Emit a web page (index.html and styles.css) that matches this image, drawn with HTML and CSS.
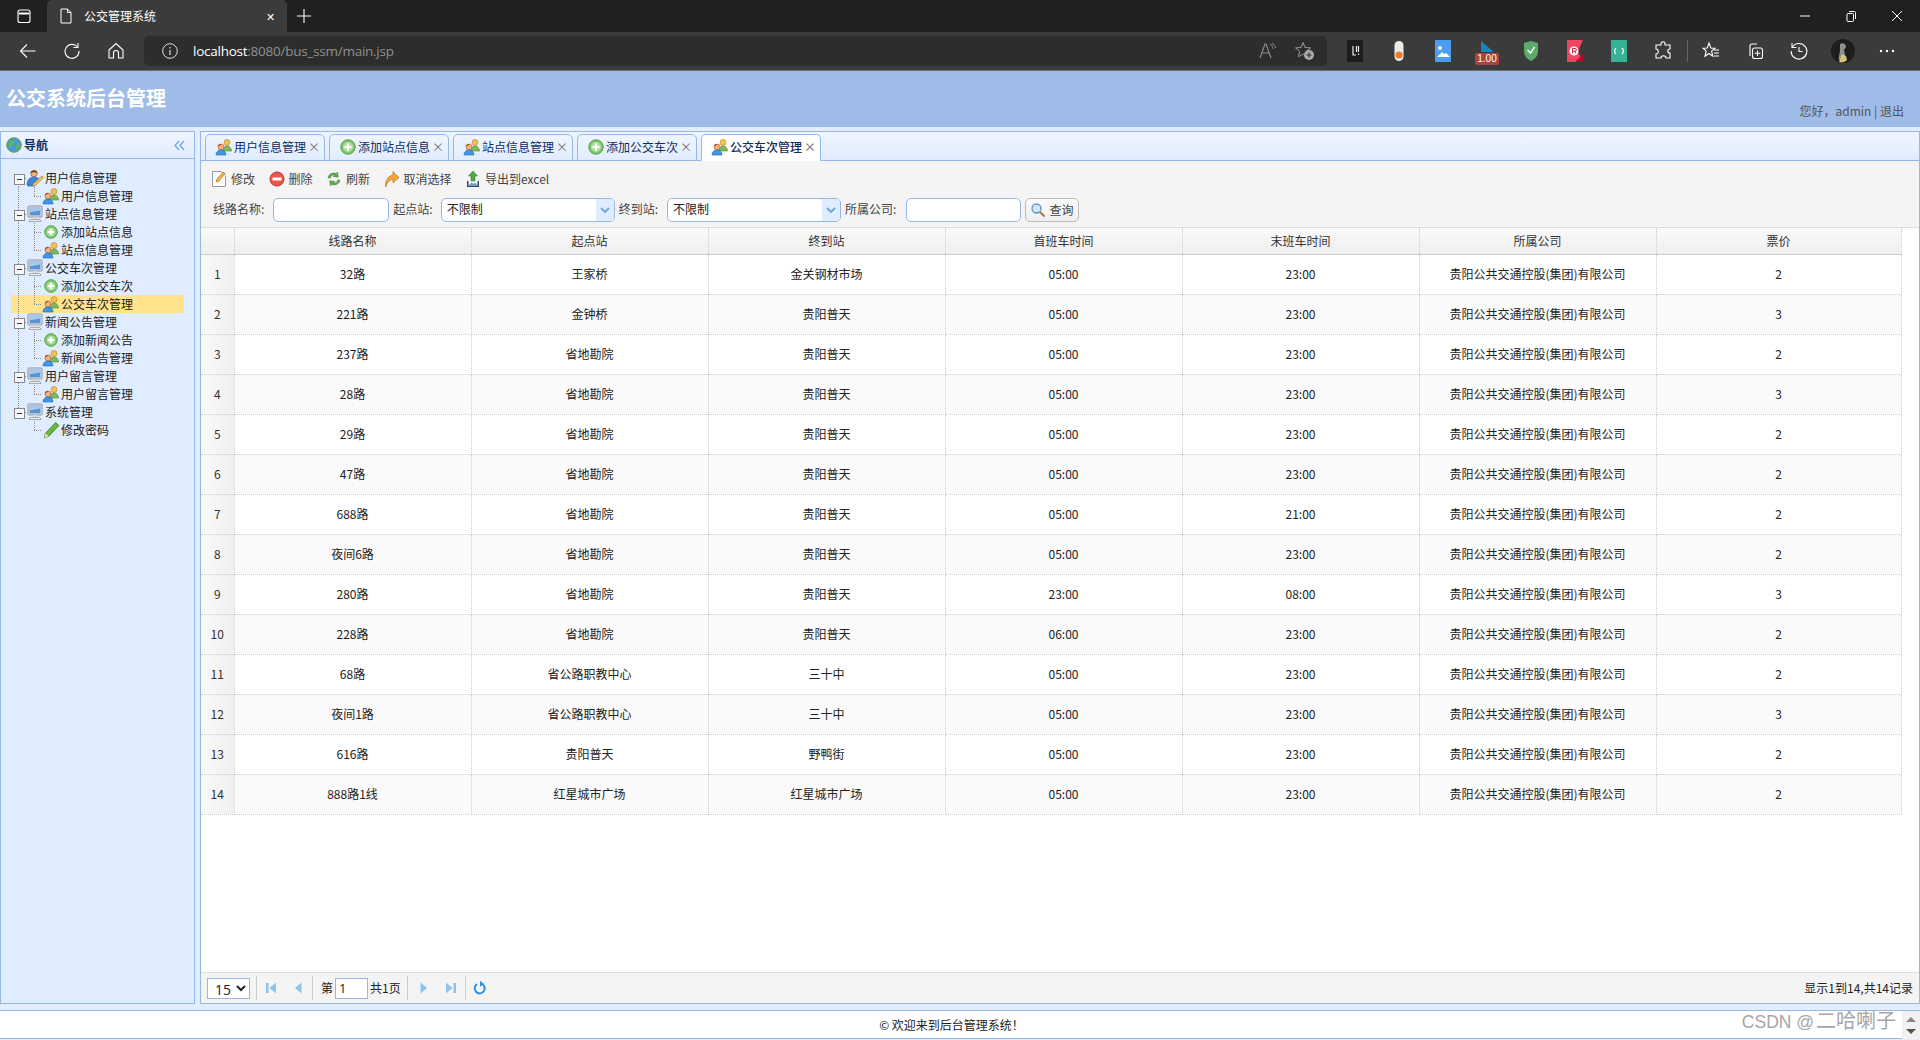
FILE: index.html
```html
<!DOCTYPE html>
<html lang="zh-CN">
<head>
<meta charset="utf-8">
<title>公交管理系统</title>
<link rel="stylesheet" href="styles.css">
</head>
<body>
<svg class="defs" width="0" height="0" aria-hidden="true">
  <defs>
    <symbol id="people" viewBox="0 0 18 18">
      <circle cx="12" cy="4.500" r="3" fill="#f4c04e" stroke="#b9842a" stroke-width=".6"/>
      <path d="M8 13c0-3 1.500-5 4-5s4.500 2 4.500 5z" fill="#7fb85a" stroke="#4d8a35" stroke-width=".6"/>
      <circle cx="6" cy="9" r="3" fill="#f0b27a" stroke="#a8552a" stroke-width=".6"/>
      <path d="M6.500 6.300c-2-.7-3.500.4-3.500 2.300l1.500-.8z" fill="#a8452a"/>
      <path d="M1 17c0-3 2-5 5-5s5 2 5 5z" fill="#3f97e6" stroke="#1f68b8" stroke-width=".6"/>
    </symbol>
    <symbol id="admin" viewBox="0 0 18 18">
      <circle cx="8" cy="4.500" r="3.300" fill="#f0b27a" stroke="#8a4a20" stroke-width=".6"/>
      <path d="M4.500 4c0-3 6-4 7 .3-2-1.300-5-1.300-7-.3z" fill="#7a3d18"/>
      <path d="M1 16c0-5 3-8 7-8 3 0 5 1.500 5.500 3L8 17H2z" fill="#3f85d6" stroke="#20589c" stroke-width=".6"/>
      <path d="M7 15l9-8 1.500 1.500-8.500 8.500H7z" fill="#f2c14e" stroke="#a87a20" stroke-width=".6"/>
    </symbol>
    <symbol id="monitor" viewBox="0 0 18 18">
      <rect x="2" y="1" width="14" height="11" rx="1" fill="#eceff3" stroke="#8a8f96"/>
      <rect x="3.500" y="2.500" width="11" height="8" fill="#5b93d2"/>
      <path d="M3.500 2.500h11v3c-4 1-8 1-11 2z" fill="#a5c8ee"/>
      <path d="M7 12h4v2H7z" fill="#d6d6d6"/>
      <path d="M4 14.500h10l1 2H3z" fill="#efefef" stroke="#8a8f96" stroke-width=".7"/>
    </symbol>
    <symbol id="plus" viewBox="0 0 16 16">
      <circle cx="8" cy="8" r="7.300" fill="#7cc46a" stroke="#4c9a42" stroke-width=".8"/>
      <circle cx="8" cy="8" r="5" fill="#b3dfa2"/>
      <path d="M8 4.500v7M4.500 8h7" stroke="#fff" stroke-width="2.200"/>
    </symbol>
    <symbol id="pencil" viewBox="0 0 16 16">
      <path d="M2 15l1-4L12 1.500l3 2.500-9 9.500z" fill="#6cbb3c" stroke="#3a7a1c" stroke-width=".8"/>
      <path d="M2 15l1-4 3 2.500z" fill="#f2dcae"/>
    </symbol>
    <symbol id="globe" viewBox="0 0 16 16">
      <circle cx="8" cy="8" r="7.300" fill="#4a9ad8" stroke="#5aa648"/>
      <path d="M3 5c2-2 4-2 5-1s0 3-1 4-1 3-3 2-2-3-1-5zM10 8c2-1 3 0 4 1-1 3-2 4-3 4s-2-3-1-5z" fill="#66b25a"/>
    </symbol>
    <symbol id="edit" viewBox="0 0 16 18">
      <path d="M1.500 1.500h9l4 4v11h-13z" fill="#fdfdfd" stroke="#9a9a9a"/>
      <path d="M5 12l1-3 6-7 2 1.500-6 7.500z" fill="#f0b848" stroke="#a8701c" stroke-width=".7"/>
    </symbol>
    <symbol id="del" viewBox="0 0 16 16">
      <circle cx="8" cy="8" r="7" fill="#e8584f" stroke="#b5342c"/>
      <path d="M3.500 8h9" stroke="#fff" stroke-width="3"/>
    </symbol>
    <symbol id="reload" viewBox="0 0 16 16">
      <path d="M2 7c.5-3.500 4-6 8-4.500l1.500-1.500.8 5.200-5.200-.6 1.400-1.500C6 3.500 4.500 5 4.500 7z" fill="#63ab4a" stroke="#3d7c2c" stroke-width=".5"/>
      <path d="M14 9c-.5 3.500-4 6-8 4.500L4.500 15l-.8-5.200 5.200.6-1.400 1.500c2.500.6 4-.9 4-2.900z" fill="#63ab4a" stroke="#3d7c2c" stroke-width=".5"/>
    </symbol>
    <symbol id="undo" viewBox="0 0 16 18">
      <path d="M1.500 17C1.500 10 4 6 9 5V1.500l6 6-6 5.500V9c-3 .5-5.500 3-7.500 8z" fill="#f2a83c" stroke="#b8741c" stroke-width=".7"/>
    </symbol>
    <symbol id="export" viewBox="0 0 16 18">
      <path d="M8 1l4.500 5H10v5H6V6H3.500z" fill="#4caa48" stroke="#2f7c2c" stroke-width=".5"/>
      <path d="M2 11v6h12v-6h-1.500v4.500h-9V11z" fill="#3a4a66"/>
      <path d="M3.500 15.500l3-3 2 1.500 2-1.500 2 3z" fill="#6f9ccb"/>
    </symbol>
    <symbol id="caret" viewBox="0 0 10 6">
      <path d="M1 1l4 4 4-4" fill="none" stroke="#6fa7de" stroke-width="2"/>
    </symbol>
  </defs>
</svg>

<div class="page">
  <div class="tabstrip">
    <svg class="strip-panel" width="16" height="16" viewBox="0 0 16 16"><rect x="2" y="2" width="12" height="12.500" rx="2" fill="none" stroke="#fff" stroke-width="1.100"/><path d="M2.500 5.500h11" stroke="#fff" stroke-width="2"/></svg>
    <div class="browser-tab">
      <svg width="14" height="16" viewBox="0 0 14 16"><path d="M2 1h6.500L12 4.500V15H2z" fill="none" stroke="#fff"/><path d="M8.500 1v3.500H12" fill="none" stroke="#fff"/></svg>
      <span class="browser-tab-title">公交管理系统</span>
      <span class="browser-tab-x">✕</span>
    </div>
    <svg class="strip-plus" width="16" height="16" viewBox="0 0 16 16"><path d="M8 1v14M1 8h14" stroke="#fff" stroke-width="1.100"/></svg>
    <div class="winctl">
      <svg width="12" height="12" viewBox="0 0 12 12"><path d="M1 6h10" stroke="#fff"/></svg>
      <svg width="12" height="12" viewBox="0 0 12 12"><rect x="2" y="3.500" width="6.500" height="8" rx="1" fill="none" stroke="#fff"/><path d="M4 1.500h5.500a1 1 0 0 1 1 1V9" fill="none" stroke="#fff"/></svg>
      <svg width="12" height="12" viewBox="0 0 12 12"><path d="M1 1l10 10M11 1L1 11" stroke="#fff"/></svg>
    </div>
  </div>

  <div class="urlbar">
    <svg class="nav-btn" width="18" height="18" viewBox="0 0 18 18"><path d="M1.500 9h15M8 2.500L1.500 9 8 15.500" fill="none" stroke="#fff" stroke-width="1.100"/></svg>
    <svg class="nav-btn" width="18" height="18" viewBox="0 0 18 18"><path d="M14.500 5A7 7 0 1 0 16 9" fill="none" stroke="#fff" stroke-width="1.100"/><path d="M15 1v4.500h-4.500" fill="none" stroke="#fff" stroke-width="1.100"/></svg>
    <svg class="nav-btn" width="18" height="18" viewBox="0 0 18 18"><path d="M2 8l7-6.500L16 8v8h-4.500v-5a2.500 2.500 0 0 0-5 0v5H2z" fill="none" stroke="#fff" stroke-width="1.100"/></svg>
    <div class="address">
      <svg width="16" height="16" viewBox="0 0 16 16"><circle cx="8" cy="8" r="7.300" fill="none" stroke="#ddd"/><path d="M8 7v5M8 4v1.500" stroke="#ddd" stroke-width="1.200"/></svg>
      <span class="url"><b>localhost</b>:8080/bus_ssm/main.jsp</span>
      <span class="spacer"></span>
      <svg class="addr-ico" width="18" height="18" viewBox="0 0 18 18"><path d="M1 16L6 2h1l5 14M3 11h7" fill="none" stroke="#8f8f8f" stroke-width="1.100"/><path d="M11 2c2 1 3 3 3 5M13 1c2 1.500 3.500 3 3.500 5" fill="none" stroke="#8f8f8f"/></svg>
      <svg class="addr-ico" width="20" height="20" viewBox="0 0 20 20"><path d="M8 1.500l2 5 5.500.4-4.200 3.500 1.300 5.300L8 13l-4.600 2.700 1.300-5.300L.5 6.900 6 6.500z" fill="none" stroke="#9a9a9a"/><circle cx="14" cy="14" r="5" fill="#aaa"/><path d="M14 11.500v5M11.500 14h5" stroke="#333" stroke-width="1.200"/></svg>
    </div>
    <div class="ext-row">
      <span class="ext"><svg width="16" height="22" viewBox="0 0 16 22"><rect width="16" height="22" fill="#1c1c1c"/><path d="M6 6v9h3M9.500 6v6M11.500 6v6M11.500 13.500v1.500" stroke="#eee" stroke-width="1.200" fill="none"/></svg></span>
      <span class="ext"><svg width="12" height="22" viewBox="0 0 12 22"><rect x="1.500" y="1" width="9" height="20" rx="4.500" fill="#ecebe6"/><circle cx="6" cy="15" r="3.500" fill="#ee7a2a"/></svg></span>
      <span class="ext"><svg width="16" height="22" viewBox="0 0 16 22"><rect width="16" height="22" fill="#4a9df0"/><circle cx="5" cy="8" r="2" fill="#fff"/><path d="M2 17l5-5 2 2 2-1 4 4z" fill="#fff"/></svg></span>
      <span class="ext ext-badge"><svg width="16" height="14" viewBox="0 0 16 14"><path d="M2 1l13 11H2z" fill="#1585c0"/></svg><em class="badge">1.00</em></span>
      <span class="ext"><svg width="16" height="22" viewBox="0 0 16 22"><path d="M1 3l7-2 7 2v8c0 5-3 8-7 10-4-2-7-5-7-10z" fill="#5cab68"/><path d="M4.500 10l3 3 4-6" fill="none" stroke="#fff" stroke-width="1.500"/></svg></span>
      <span class="ext"><svg width="16" height="22" viewBox="0 0 16 22"><rect width="16" height="22" fill="#ee4560"/><path d="M16 0l-5 11 5 11z" fill="#3b3b3b"/><path d="M8 22l8-8v8z" fill="#b01030"/><circle cx="7" cy="11" r="4.500" fill="#fff"/><path d="M5.500 13.500v-5h2.500a1.300 1.300 0 0 1 0 2.800H5.500M7.500 11l1.500 2.500" stroke="#d02040" fill="none"/></svg></span>
      <span class="ext"><svg width="16" height="22" viewBox="0 0 16 22"><rect width="16" height="22" fill="#35b394"/><path d="M5 8a4 4 0 0 0 0 6M11 8a4 4 0 0 1 0 6" fill="none" stroke="#fff" stroke-width="1.200"/></svg></span>
      <span class="ext"><svg width="18" height="20" viewBox="0 0 18 20"><path d="M7 3c0-3 4-3 4 0v1h5v4c-3 0-3 4 0 4v5h-4c0-3-5-3-5 0H2v-4c3 0 3-5 0-5V4h5z" fill="none" stroke="#fff" stroke-width="1.100"/></svg></span>
      <span class="ext-sep"></span>
      <span class="ext"><svg width="18" height="20" viewBox="0 0 18 20"><path d="M7 2l1.800 5 4.200.2-3.400 3 1.200 5L7 12.500 3 15.200l1.200-5L1 7.200 5.200 7z" fill="none" stroke="#fff" stroke-width="1.100"/><path d="M12 9h5M12 12h5M12 15h5" stroke="#fff" stroke-width="1.100"/></svg></span>
      <span class="ext"><svg width="18" height="20" viewBox="0 0 18 20"><path d="M4 15V5a2 2 0 0 1 2-2h5" fill="none" stroke="#fff" stroke-width="1.100"/><rect x="6.500" y="7" width="10" height="10.500" rx="2" fill="none" stroke="#fff" stroke-width="1.100"/><path d="M11.500 9.500v5.500M8.700 12.200h5.600" stroke="#fff" stroke-width="1.100"/></svg></span>
      <span class="ext"><svg width="18" height="18" viewBox="0 0 18 18"><path d="M2.500 5A7.800 7.800 0 1 1 1.200 9" fill="none" stroke="#fff" stroke-width="1.100"/><path d="M2 1v4.500h4.500M9 5v4.500h3.500" fill="none" stroke="#fff" stroke-width="1.100"/></svg></span>
      <span class="ext"><svg width="24" height="24" viewBox="0 0 24 24"><circle cx="12" cy="12" r="12" fill="#1d1d1d"/><path d="M9 5c3-2 6 0 6 3l-2 3 1 5-3 6c-3 0-4-2-3-5l1-5z" fill="#8f8f8f"/><path d="M8 23l3-8 4 2 1 4c-2 2-5 3-8 2z" fill="#d8c27a"/></svg></span>
      <span class="ext"><svg width="16" height="4" viewBox="0 0 16 4"><circle cx="2" cy="2" r="1.200" fill="#fff"/><circle cx="8" cy="2" r="1.200" fill="#fff"/><circle cx="14" cy="2" r="1.200" fill="#fff"/></svg></span>
    </div>
  </div>

  <header class="app-head">
    <h1 class="app-title">公交系统后台管理</h1>
    <div class="app-user">您好，admin | 退出</div>
  </header>

  <div class="workspace">
    <aside class="nav-panel">
      <div class="nav-head">
        <svg class="i16" width="16" height="16"><use href="#globe"/></svg>
        <span class="nav-title">导航</span>
        <span class="spacer"></span>
        <svg class="collapse" width="11" height="11" viewBox="0 0 11 11"><path d="M5 1L1 5.500 5 10M10 1L6 5.500 10 10" fill="none" stroke="#6fa7de" stroke-width="1.300"/></svg>
      </div>
      <ul class="tree">
        <li class="node"><span class="cell v-first tog"></span><svg class="ico" width="18" height="18"><use href="#admin"/></svg><span class="lbl">用户信息管理</span></li>
        <li class="node"><span class="cell v"></span><span class="cell elbow"></span><svg class="ico" width="18" height="18"><use href="#people"/></svg><span class="lbl">用户信息管理</span></li>
        <li class="node"><span class="cell v tog"></span><svg class="ico" width="18" height="18"><use href="#monitor"/></svg><span class="lbl">站点信息管理</span></li>
        <li class="node"><span class="cell v"></span><span class="cell tee"></span><svg class="ico ico-sm" width="14" height="14"><use href="#plus"/></svg><span class="lbl">添加站点信息</span></li>
        <li class="node"><span class="cell v"></span><span class="cell elbow"></span><svg class="ico" width="18" height="18"><use href="#people"/></svg><span class="lbl">站点信息管理</span></li>
        <li class="node"><span class="cell v tog"></span><svg class="ico" width="18" height="18"><use href="#monitor"/></svg><span class="lbl">公交车次管理</span></li>
        <li class="node"><span class="cell v"></span><span class="cell tee"></span><svg class="ico ico-sm" width="14" height="14"><use href="#plus"/></svg><span class="lbl">添加公交车次</span></li>
        <li class="node selected"><span class="cell v"></span><span class="cell elbow"></span><svg class="ico" width="18" height="18"><use href="#people"/></svg><span class="lbl">公交车次管理</span></li>
        <li class="node"><span class="cell v tog"></span><svg class="ico" width="18" height="18"><use href="#monitor"/></svg><span class="lbl">新闻公告管理</span></li>
        <li class="node"><span class="cell v"></span><span class="cell tee"></span><svg class="ico ico-sm" width="14" height="14"><use href="#plus"/></svg><span class="lbl">添加新闻公告</span></li>
        <li class="node"><span class="cell v"></span><span class="cell elbow"></span><svg class="ico" width="18" height="18"><use href="#people"/></svg><span class="lbl">新闻公告管理</span></li>
        <li class="node"><span class="cell v tog"></span><svg class="ico" width="18" height="18"><use href="#monitor"/></svg><span class="lbl">用户留言管理</span></li>
        <li class="node"><span class="cell v"></span><span class="cell elbow"></span><svg class="ico" width="18" height="18"><use href="#people"/></svg><span class="lbl">用户留言管理</span></li>
        <li class="node"><span class="cell v-last tog"></span><svg class="ico" width="18" height="18"><use href="#monitor"/></svg><span class="lbl">系统管理</span></li>
        <li class="node"><span class="cell"></span><span class="cell elbow"></span><svg class="ico" width="18" height="18"><use href="#pencil"/></svg><span class="lbl">修改密码</span></li>
      </ul>
    </aside>

    <main class="main-panel">
      <div class="tabs">
        <div class="tab"><svg width="18" height="18"><use href="#people"/></svg><span class="tab-text">用户信息管理</span><span class="tab-x">×</span></div>
        <div class="tab"><svg width="16" height="16"><use href="#plus"/></svg><span class="tab-text">添加站点信息</span><span class="tab-x">×</span></div>
        <div class="tab"><svg width="18" height="18"><use href="#people"/></svg><span class="tab-text">站点信息管理</span><span class="tab-x">×</span></div>
        <div class="tab"><svg width="16" height="16"><use href="#plus"/></svg><span class="tab-text">添加公交车次</span><span class="tab-x">×</span></div>
        <div class="tab active"><svg width="18" height="18"><use href="#people"/></svg><span class="tab-text">公交车次管理</span><span class="tab-x">×</span></div>
      </div>

      <div class="tools">
        <div class="tool-row">
          <span class="tool"><svg width="16" height="18"><use href="#edit"/></svg>修改</span>
          <span class="tool"><svg width="16" height="16"><use href="#del"/></svg>删除</span>
          <span class="tool"><svg width="16" height="16"><use href="#reload"/></svg>刷新</span>
          <span class="tool"><svg width="16" height="18"><use href="#undo"/></svg>取消选择</span>
          <span class="tool"><svg width="16" height="18"><use href="#export"/></svg>导出到excel</span>
        </div>
        <div class="search-row">
          <label class="lab lab-first">线路名称:</label>
          <input class="text-in" type="text">
          <label class="lab lab-mid">起点站:</label>
          <div class="combo"><span class="combo-text">不限制</span><span class="combo-btn"><svg width="10" height="6"><use href="#caret"/></svg></span></div>
          <label class="lab lab-tight">终到站:</label>
          <div class="combo"><span class="combo-text">不限制</span><span class="combo-btn"><svg width="10" height="6"><use href="#caret"/></svg></span></div>
          <label class="lab lab-co">所属公司:</label>
          <input class="text-in text-co" type="text">
          <button class="search-btn" type="button"><svg width="16" height="16" viewBox="0 0 16 16"><circle cx="6.500" cy="6.500" r="4.500" fill="#cfe6fa" stroke="#5d94c8" stroke-width="1.300"/><path d="M10 10l4.500 4.500" stroke="#a87a3c" stroke-width="2"/></svg>查询</button>
        </div>
      </div>

      <div class="grid-wrap">
        <table class="grid">
          <colgroup><col class="c-num"><col class="c-w"><col class="c-w"><col class="c-w"><col class="c-w"><col class="c-w"><col class="c-w"><col class="c-last"></colgroup>
          <thead><tr><th></th><th>线路名称</th><th>起点站</th><th>终到站</th><th>首班车时间</th><th>末班车时间</th><th>所属公司</th><th>票价</th></tr></thead>
          <tbody>
            <tr><td class="num">1</td><td>32路</td><td>王家桥</td><td>金关钢材市场</td><td>05:00</td><td>23:00</td><td>贵阳公共交通控股(集团)有限公司</td><td>2</td></tr>
            <tr><td class="num">2</td><td>221路</td><td>金钟桥</td><td>贵阳普天</td><td>05:00</td><td>23:00</td><td>贵阳公共交通控股(集团)有限公司</td><td>3</td></tr>
            <tr><td class="num">3</td><td>237路</td><td>省地勘院</td><td>贵阳普天</td><td>05:00</td><td>23:00</td><td>贵阳公共交通控股(集团)有限公司</td><td>2</td></tr>
            <tr><td class="num">4</td><td>28路</td><td>省地勘院</td><td>贵阳普天</td><td>05:00</td><td>23:00</td><td>贵阳公共交通控股(集团)有限公司</td><td>3</td></tr>
            <tr><td class="num">5</td><td>29路</td><td>省地勘院</td><td>贵阳普天</td><td>05:00</td><td>23:00</td><td>贵阳公共交通控股(集团)有限公司</td><td>2</td></tr>
            <tr><td class="num">6</td><td>47路</td><td>省地勘院</td><td>贵阳普天</td><td>05:00</td><td>23:00</td><td>贵阳公共交通控股(集团)有限公司</td><td>2</td></tr>
            <tr><td class="num">7</td><td>688路</td><td>省地勘院</td><td>贵阳普天</td><td>05:00</td><td>21:00</td><td>贵阳公共交通控股(集团)有限公司</td><td>2</td></tr>
            <tr><td class="num">8</td><td>夜间6路</td><td>省地勘院</td><td>贵阳普天</td><td>05:00</td><td>23:00</td><td>贵阳公共交通控股(集团)有限公司</td><td>2</td></tr>
            <tr><td class="num">9</td><td>280路</td><td>省地勘院</td><td>贵阳普天</td><td>23:00</td><td>08:00</td><td>贵阳公共交通控股(集团)有限公司</td><td>3</td></tr>
            <tr><td class="num">10</td><td>228路</td><td>省地勘院</td><td>贵阳普天</td><td>06:00</td><td>23:00</td><td>贵阳公共交通控股(集团)有限公司</td><td>2</td></tr>
            <tr><td class="num">11</td><td>68路</td><td>省公路职教中心</td><td>三十中</td><td>05:00</td><td>23:00</td><td>贵阳公共交通控股(集团)有限公司</td><td>2</td></tr>
            <tr><td class="num">12</td><td>夜间1路</td><td>省公路职教中心</td><td>三十中</td><td>05:00</td><td>23:00</td><td>贵阳公共交通控股(集团)有限公司</td><td>3</td></tr>
            <tr><td class="num">13</td><td>616路</td><td>贵阳普天</td><td>野鸭街</td><td>05:00</td><td>23:00</td><td>贵阳公共交通控股(集团)有限公司</td><td>2</td></tr>
            <tr><td class="num">14</td><td>888路1线</td><td>红星城市广场</td><td>红星城市广场</td><td>05:00</td><td>23:00</td><td>贵阳公共交通控股(集团)有限公司</td><td>2</td></tr>
          </tbody>
        </table>
      </div>

      <div class="pager">
        <select class="page-size"><option>15</option></select>
        <span class="pg-sep"></span>
        <svg class="pg-btn" width="16" height="16" viewBox="0 0 16 16"><path d="M3 3h2.500v10H3zM13 2.500v11L6.500 8z" fill="#8cc4ee"/></svg>
        <svg class="pg-btn" width="16" height="16" viewBox="0 0 16 16"><path d="M11.500 2.500v11L5 8z" fill="#8cc4ee"/></svg>
        <span class="pg-sep"></span>
        <span class="pg-text">第</span>
        <input class="pg-input" type="text" value="1">
        <span class="pg-text">共1页</span>
        <span class="pg-sep"></span>
        <svg class="pg-btn" width="16" height="16" viewBox="0 0 16 16"><path d="M4.500 2.500v11L11 8z" fill="#8cc4ee"/></svg>
        <svg class="pg-btn" width="16" height="16" viewBox="0 0 16 16"><path d="M3 2.500v11L9.500 8zM10.500 3H13v10h-2.500z" fill="#8cc4ee"/></svg>
        <span class="pg-sep"></span>
        <svg class="pg-btn" width="16" height="16" viewBox="0 0 16 16"><path d="M9 3.600a5 5 0 1 1-4 .6" fill="none" stroke="#2e8fe0" stroke-width="2"/><path d="M8 .8v6L12 4z" fill="#2e8fe0"/></svg>
        <span class="spacer"></span>
        <span class="pg-info">显示1到14,共14记录</span>
      </div>
    </main>
  </div>

  <footer class="foot">© 欢迎来到后台管理系统！</footer>
  <div class="watermark"><span class="wm-latin">CSDN @</span>二哈喇子 !</div>
  <div class="mini-scroll"><span class="sc-up"></span><span class="sc-down"></span></div>
</div>
</body>
</html>
```
FILE: styles.css
```css
* { box-sizing: border-box; }
html, body { margin: 0; padding: 0; height: 100%; overflow: hidden; }
body { font: 12px/18px "Noto Sans CJK SC", "Noto Sans", sans-serif; color: #222; }
.defs { position: absolute; }
ul { list-style: none; margin: 0; padding: 0; }
.spacer { flex: 1; }
.page { position: relative; display: flex; flex-direction: column; height: 1040px; background: #e3eefa; }

/* browser chrome */
.tabstrip { display: flex; align-items: center; height: 32px; flex: none; background: #202020; padding-left: 16px; }
.strip-panel { margin-right: 15px; }
.browser-tab { display: flex; align-items: center; width: 240px; height: 32px; padding-left: 12px; background: #3b3b3b; border-radius: 5px 5px 0 0; color: #fff; }
.browser-tab-title { margin-left: 11px; flex: 1; }
.browser-tab-x { font-size: 11px; margin-right: 12px; }
.strip-plus { margin-left: 9px; }
.winctl { margin-left: auto; display: flex; gap: 34px; padding-right: 17px; }
.urlbar { display: flex; align-items: center; height: 39px; flex: none; background: #3b3b3b; border-bottom: 1px solid #6b6b6b; padding: 0 0 1px 19px; }
.nav-btn { margin-right: 26px; }
.nav-btn + .address { margin-left: -7px; }
.address { display: flex; align-items: center; width: 1183px; height: 30px; background: #2d2d2d; border-radius: 5px; padding-left: 18px; padding-right: 12px; }
.url { margin-left: 15px; font: 13.5px/18px "Open Sans", sans-serif; color: #8f8f8f; letter-spacing: -.25px; }
.url b { font-weight: 400; color: #fff; }
.addr-ico { margin-left: 18px; }
.ext-row { display: flex; align-items: center; padding-left: 6px; }
.ext { display: flex; flex-direction: column; align-items: center; justify-content: center; width: 44px; height: 30px; }
.ext-sep { width: 1px; height: 22px; background: #666; margin: 0 1px 0 2px; }
.ext-badge { padding-top: 4px; }
.badge { display: block; width: 24px; height: 12px; margin-top: -1px; background: #a94442; border-radius: 2px; color: #fff; font: 10px/12px "Liberation Sans", sans-serif; text-align: center; }

/* app header */
.app-head { display: flex; justify-content: space-between; height: 56px; flex: none; background: #9fbce8; border-bottom: 1px solid #95b8e7; }
.app-title { margin: 14px 0 0 6px; font: bold 20px/26px "Noto Sans CJK SC", sans-serif; color: #fff; }
.app-user { align-self: flex-end; margin: 0 16px 6px 0; color: #555; }

/* layout */
.workspace { display: flex; gap: 5px; flex: 1; min-height: 0; padding-top: 4px; }
.nav-panel { display: flex; flex-direction: column; width: 195px; flex: none; background: #e0ecff; border: 1px solid #95b8e7; }
.nav-head { display: flex; align-items: center; height: 27px; flex: none; padding: 0 9px 0 5px; background: linear-gradient(#eff5ff, #e0ecff); border-bottom: 1px solid #95b8e7; }
.nav-title { margin-left: 2px; font-weight: 700; color: #0e2d5f; }
.tree { padding: 10px 0 0 10px; width: 183px; }
.node { display: flex; align-items: center; height: 18px; white-space: nowrap; }
.node.selected { background: #ffe48d; }
.cell { position: relative; width: 16px; height: 18px; flex: none; background-repeat: no-repeat; }
.node > .cell:first-child { width: 15px; }
.lbl { margin-left: 1px; color: #222; }
.ico { flex: none; }
.ico-sm { margin: 0 2px; }
.v, .v-first, .v-last, .tee, .elbow { --dots: repeating-linear-gradient(#8a8a8a 0 1px, transparent 1px 2px); --dash: repeating-linear-gradient(90deg, #8a8a8a 0 1px, transparent 1px 2px); }
.v { background-image: var(--dots); background-position: 7px 0; background-size: 1px 18px; }
.v-first { background-image: var(--dots); background-position: 7px 9px; background-size: 1px 9px; }
.v-last { background-image: var(--dots); background-position: 7px 0; background-size: 1px 9px; }
.tee { background-image: var(--dots), var(--dash); background-position: 8px 0, 8px 9px; background-size: 1px 18px, 8px 1px; }
.elbow { background-image: var(--dots), var(--dash); background-position: 8px 0, 8px 9px; background-size: 1px 9px, 8px 1px; }
.tog::after { content: ""; position: absolute; left: 3px; top: 5px; width: 9px; height: 9px; border: 1px solid #888; background: linear-gradient(90deg, #333, #333) center / 5px 1px no-repeat, #f4f7fb; }
.tog::before { content: ""; position: absolute; left: 12px; top: 9px; width: 3px; height: 1px; background: #8a8a8a; }

/* main panel */
.main-panel { display: flex; flex-direction: column; flex: 1; min-width: 0; background: #fff; border: 1px solid #95b8e7; }
.tabs { display: flex; gap: 4px; align-items: flex-end; height: 29px; flex: none; padding-left: 4px; background: linear-gradient(#eff5ff, #e0ecff); border-bottom: 1px solid #95b8e7; }
.tab { display: flex; align-items: center; width: 120px; height: 27px; margin-bottom: -1px; padding: 0 0 2px 9px; background: linear-gradient(#eff5ff, #e0ecff); border: 1px solid #95b8e7; border-radius: 5px 5px 0 0; color: #0e2d5f; }
.tab svg { flex: none; }
.tab svg[width="16"] { margin: 0 1px; }
.tab.active { background: #fff; border-bottom-color: #fff; color: #0e2d5f; font-weight: 500; }
.tab-text { margin-left: 1px; }
.tab-x { margin-left: 2px; font-size: 12px; color: #777; }
.tools { flex: none; height: 67px; background: #f4f4f4; border-bottom: 1px solid #ddd; }
.tool-row { display: flex; height: 35px; align-items: center; padding: 0 0 0 10px; gap: 13.5px; }
.tool { display: flex; align-items: center; gap: 4px; color: #444; }
.search-row { display: flex; align-items: center; height: 24px; margin-top: 2px; padding-left: 12px; }
.lab { color: #444; margin-bottom: 2px; }
.lab-mid { margin-left: 4px; margin-right: 8px; }
.lab-first { margin-right: 9px; }
.lab-tight { margin: 0 9px 2px 4px; }
.lab-co { margin: 0 10px 2px 4px; }
.text-in { width: 116px; height: 24px; padding: 0 4px; border: 1px solid #95b8e7; border-radius: 5px; background: #fff; outline: none; }
.text-co { width: 115px; }
.combo { display: flex; align-items: center; width: 174px; height: 24px; border: 1px solid #95b8e7; border-radius: 5px; background: #fff; overflow: hidden; }
.combo-text { flex: 1; padding: 0 0 2px 5px; color: #222; }
.combo-btn { display: flex; align-items: center; justify-content: center; width: 18px; height: 100%; background: #e0ecff; }
.search-btn { display: flex; align-items: center; gap: 3px; width: 54px; height: 24px; margin-left: 4px; padding: 0 0 0 4px; border: 1px solid #bbb; border-radius: 5px; background: linear-gradient(#fafafa, #efefef); font: inherit; color: #444; }
.grid-wrap { flex: 1; min-height: 0; overflow: hidden; background: #fff; }
.grid { width: 1700px; table-layout: fixed; border-collapse: collapse; }
.c-num { width: 33px; }
.c-w { width: 237px; }
.c-last { width: 245px; }
.grid th { height: 26px; padding: 0; font-weight: 400; color: #333; text-align: center; background: linear-gradient(#f9f9f9, #efefef); border-right: 1px dotted #ccc; border-bottom: 1px solid #ccc; }
.grid td { height: 40px; padding: 0; text-align: center; color: #222; border-right: 1px dotted #ccc; border-bottom: 1px dotted #ccc; }
.grid tr:nth-child(even) td { background: #fafafa; }
.grid td.num, .grid tr:nth-child(even) td.num { color: #333; background: linear-gradient(90deg, #f9f9f9, #efefef); }
.pager { display: flex; align-items: center; height: 31px; flex: none; padding: 0 6px 0 6px; background: #f4f4f4; border-top: 1px solid #ddd; }
.page-size { width: 43px; height: 21px; padding: 0 0 0 3px; border: 1px solid #95b8e7; background: #fff; font: 14px "Open Sans", sans-serif; color: #222; outline: none; }
.pg-sep { width: 1px; height: 24px; background: #ccc; margin: 0 6px; }
.pg-btn + .pg-btn { margin-left: 11px; }
.pg-text { color: #222; margin-left: 2px; }
.pg-text + .pg-sep { margin-right: 8px; }
.pg-input { width: 33px; height: 21px; margin-left: 2px; padding: 0 3px; border: 1px solid #95b8e7; font: 13px "Open Sans", sans-serif; color: #222; outline: none; }
.pg-info { color: #222; }

/* footer */
.foot { flex: none; height: 29px; margin: 6px 0 1px; padding: 5px 17px 0 0; text-align: center; background: #fff; border-top: 1px solid #95b8e7; border-bottom: 1px solid #95b8e7; color: #222; }
.watermark { position: absolute; right: 13px; bottom: 6px; font: 20px/24px "Noto Sans CJK SC", sans-serif; color: #a6a6a6; white-space: nowrap; }
.wm-latin { font: 17.5px/24px "Liberation Sans", sans-serif; margin-right: 2px; }
.mini-scroll { position: absolute; right: 0; bottom: 1px; width: 18px; height: 28px; background: #f1f1f1; }
.sc-up, .sc-down { position: absolute; left: 4px; width: 0; height: 0; border-left: 5px solid transparent; border-right: 5px solid transparent; }
.sc-up { top: 6px; border-bottom: 5px solid #8a8a8a; }
.sc-down { top: 18px; border-top: 5px solid #555; }
```
